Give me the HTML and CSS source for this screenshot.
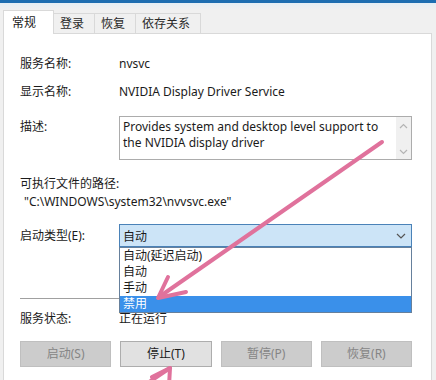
FILE: index.html
```html
<!DOCTYPE html>
<html>
<head>
<meta charset="utf-8">
<link rel="stylesheet" href="styles.css">
</head>
<body>
<div class="window">
  <div class="titlebar"></div>
  <div class="tabs">
    <div class="tab active">常规</div>
    <div class="tab">登录</div>
    <div class="tab">恢复</div>
    <div class="tab">依存关系</div>
  </div>
  <div class="panel">
    <div class="row">
      <span class="label">服务名称:</span>
      <span class="value">nvsvc</span>
    </div>
    <div class="row r2">
      <span class="label">显示名称:</span>
      <span class="value">NVIDIA Display Driver Service</span>
    </div>
    <div class="row r-desc">
      <span class="label">描述:</span>
      <div class="desc-box">
        <div class="desc-text">Provides system and desktop level support to<br>the NVIDIA display driver</div>
        <div class="scroll">
          <svg width="9" height="6" viewBox="0 0 9 6"><path d="M1 5 L4.5 1.5 L8 5" fill="none" stroke="#b4b4b4" stroke-width="1.2"/></svg>
          <svg width="9" height="6" viewBox="0 0 9 6"><path d="M1 1 L4.5 4.5 L8 1" fill="none" stroke="#b4b4b4" stroke-width="1.2"/></svg>
        </div>
      </div>
    </div>
    <div class="path-label">可执行文件的路径:</div>
    <div class="path-value">"C:\WINDOWS\system32\nvvsvc.exe"</div>
    <div class="row r-start">
      <span class="label">启动类型(E):</span>
      <div class="select">
        <span>自动</span>
        <svg width="10" height="6" viewBox="0 0 10 6"><path d="M1 1 L5 5 L9 1" fill="none" stroke="#555" stroke-width="1.2"/></svg>
        <ul class="options">
          <li>自动(延迟启动)</li>
          <li>自动</li>
          <li>手动</li>
          <li class="selected">禁用</li>
        </ul>
      </div>
    </div>
    <div class="sep"></div>
    <div class="row r-status">
      <span class="label">服务状态:</span>
      <span class="value status">正在运行</span>
    </div>
    <div class="buttons">
      <div class="btn disabled">启动(S)</div>
      <div class="btn">停止(T)</div>
      <div class="btn disabled">暂停(P)</div>
      <div class="btn disabled">恢复(R)</div>
    </div>
  </div>
  <svg class="annot" width="436" height="380" viewBox="0 0 436 380">
    <g fill="none" stroke="#e0729c" stroke-width="4" stroke-linecap="round" stroke-linejoin="round">
      <path d="M382 142 L159 297"/>
      <path d="M168 277 L158 298 L186 292"/>
      <path d="M170 368 L130 395"/>
      <path d="M152 377 L170 368 L169 386"/>
    </g>
  </svg>
</div>
</body>
</html>
```

FILE: styles.css
```css
* {
  box-sizing: border-box;
  margin: 0;
  padding: 0;
}

html,
body {
  width: 436px;
  height: 380px;
  overflow: hidden;
}

body {
  background: #f0f0f0;
  font-family: "Noto Sans", "Noto Sans CJK SC", sans-serif;
  font-size: 12px;
  color: #1b1b1b;
}

.window {
  position: relative;
  width: 436px;
  height: 380px;
  overflow: hidden;
  display: flex;
  flex-direction: column;
}

.titlebar {
  flex: none;
  height: 3px;
  background: #1d6db1;
}

.tabs {
  flex: none;
  position: relative;
  z-index: 1;
  height: 30px;
  display: flex;
  align-items: flex-end;
  padding-left: 4px;
  background: linear-gradient(#e4eef5 0, #f0f0f0 7px);
}

.tab {
  height: 20px;
  line-height: 19px;
  padding: 0 10px 0 6px;
  margin-left: -1px;
  border: 1px solid #d9d9d9;
  border-bottom: none;
  background: #f0f0f0;
  color: #2a2a2a;
}

.tab.active {
  height: 24px;
  line-height: 24px;
  margin-bottom: -1px;
  padding: 0 17px 0 8px;
  background: #fff;
  color: #1b1b1b;
}

.panel {
  flex: 1;
  margin: 0 4px 0 3px;
  padding: 22px 19px 0 16px;
  background: #fff;
  border: 1px solid #d9d9d9;
  border-bottom: none;
}

.row {
  display: flex;
  align-items: flex-start;
}

.label {
  flex: none;
  width: 99px;
  line-height: 16px;
}

.value {
  line-height: 16px;
}

.r2 {
  margin-top: 12px;
}

.r-desc {
  margin-top: 16px;
}

.r-desc .label {
  padding-top: 3px;
}

.desc-box {
  flex: 1;
  height: 44px;
  display: flex;
  border: 1px solid #acacac;
}

.desc-text {
  flex: 1;
  padding: 2px 3px;
  line-height: 16px;
}

.scroll {
  flex: none;
  width: 15px;
  display: flex;
  flex-direction: column;
  justify-content: space-between;
  align-items: center;
  padding: 6px 0 4px;
  background: #f0f0f0;
}

.path-label {
  margin-top: 16px;
  line-height: 16px;
}

.path-value {
  margin-top: 2px;
  padding-left: 4px;
  line-height: 16px;
}

.r-start {
  margin-top: 14px;
  align-items: center;
}

.select {
  flex: 1;
  position: relative;
  height: 23px;
  display: flex;
  align-items: center;
  justify-content: space-between;
  padding: 0 5px 0 3px;
  background: #cce4f7;
  border: 1px solid #4a82b8;
}

.options {
  position: absolute;
  top: 22px;
  left: -1px;
  right: -1px;
  list-style: none;
  background: #fff;
  border: 1px solid #66809c;
  z-index: 2;
}

.options li {
  height: 16px;
  line-height: 16px;
  padding-left: 3px;
}

.options li.selected {
  background: #3a90ea;
  color: #fff;
}

.sep {
  margin-top: 51px;
  height: 1px;
  background: #a0a0a0;
}

.r-status {
  margin-top: 12px;
}

.buttons {
  margin-top: 14px;
  display: grid;
  grid-template-columns: repeat(4, 1fr);
  column-gap: 9px;
}

.btn {
  height: 26px;
  line-height: 24px;
  text-align: center;
  background: #e1e1e1;
  border: 1px solid #adadad;
  color: #1b1b1b;
}

.btn.disabled {
  background: #cccccc;
  border-color: #bfbfbf;
  color: #858585;
}

.annot {
  position: absolute;
  left: 0;
  top: 0;
  pointer-events: none;
  z-index: 5;
}
```
